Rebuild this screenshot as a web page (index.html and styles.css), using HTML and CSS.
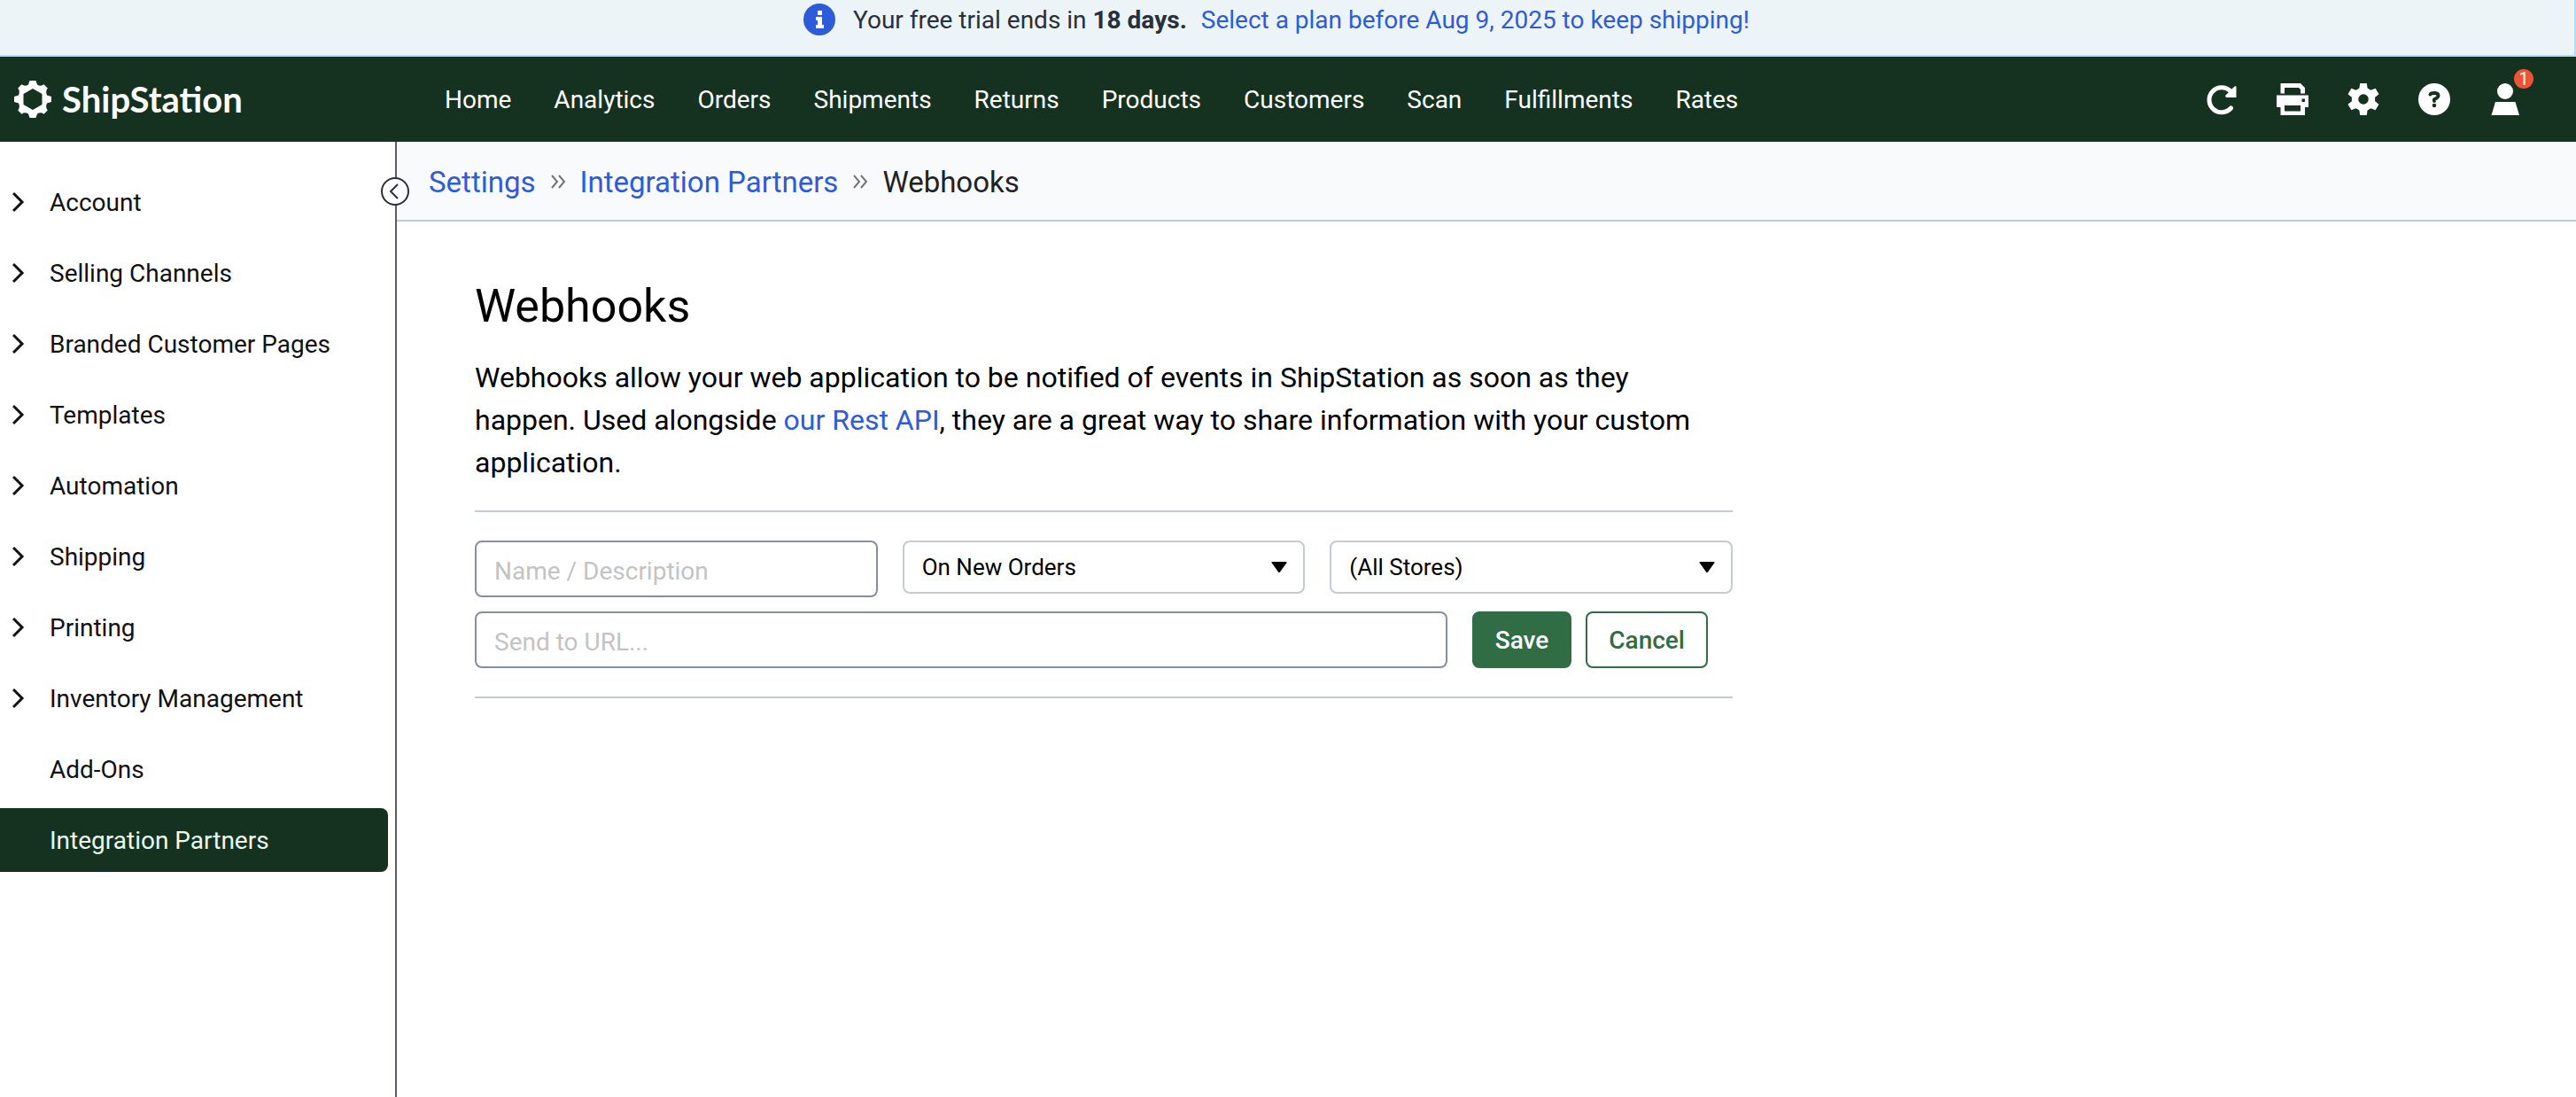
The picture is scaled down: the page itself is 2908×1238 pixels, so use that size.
FILE: index.html
```html
<!DOCTYPE html>
<html lang="en">
<head>
<meta charset="utf-8">
<title>Webhooks - ShipStation</title>
<link rel="stylesheet" href="styles.css">
</head>
<body>
<div class="banner">
  <svg class="banner-icon" viewBox="0 0 36 36" aria-hidden="true"><circle cx="18" cy="18" r="18" fill="#2e5bd7"/><path fill="#fff" d="M16 8h5v5h-5zM14 15h7v9h2v4h-9v-4h2v-5h-2z"/></svg>
  <p class="banner-text">Your free trial ends in <strong>18 days.</strong></p>
  <a class="banner-link" href="#plans">Select a plan before Aug 9, 2025 to keep shipping!</a>
</div>

<header class="topbar">
  <a class="brand" href="#home">
    <svg class="brand-mark" viewBox="0 0 42 42" aria-hidden="true"><path fill="#fff" fill-rule="evenodd" d="M17.500 0h7l1.500 4.500Q30 7 33.500 4.200L37.800 8.500Q35 12 37 16.500L42 18v6l-5 1.500Q35 30 37.800 33.500L33.500 37.800Q30 35 26 37.500L24.500 42h-7L16 37.500Q12 35 8.500 37.800L4.200 33.500Q7 30 5 25.500L0 24v-6l5-1.500Q7 12 4.200 8.500L8.500 4.200Q12 7 16 4.500zM21 9L10.500 15v12L21 33l10.500-6V15z"/></svg>
    <span class="brand-name">ShipStation</span>
  </a>
  <nav class="main-nav" aria-label="Main">
    <a href="#home">Home</a>
    <a href="#analytics">Analytics</a>
    <a href="#orders">Orders</a>
    <a href="#shipments">Shipments</a>
    <a href="#returns">Returns</a>
    <a href="#products">Products</a>
    <a href="#customers">Customers</a>
    <a href="#scan">Scan</a>
    <a href="#fulfillments">Fulfillments</a>
    <a href="#rates">Rates</a>
  </nav>
  <div class="tools">
    <button class="tool" type="button" aria-label="Refresh"><svg viewBox="0 0 36 36" aria-hidden="true"><path fill="none" stroke="#fff" stroke-width="5" stroke-linecap="round" d="M28.500 28A14 14 0 1 1 28 9"/><path fill="#fff" d="M34.500 3.500V16H24q-2.500-.5-1.500-2.500L32 4q1.500-1.200 2.500-.5z"/></svg></button>
    <button class="tool" type="button" aria-label="Print"><svg viewBox="0 0 36 36" aria-hidden="true"><path fill="#fff" fill-rule="evenodd" d="M4.500 0H27l5 5v6.500h-5V7l-2-2H9v6.500H4.500zM0 13.500h36V27h-4v9H4.500v-9H0zM9 25v6.500h18V25zM28.500 17.500v3.500H32v-3.500z"/></svg></button>
    <button class="tool" type="button" aria-label="Settings"><svg viewBox="0 0 36 36" aria-hidden="true"><path fill="#fff" fill-rule="evenodd" d="M14.200 0h7.600l.8 5.500 3.800 2.200 5.200-2 3.900 6.600-4.400 3.400v4.600l4.400 3.400-3.900 6.600-5.200-2-3.800 2.200-.8 5.500h-7.600l-.8-5.500-3.800-2.200-5.200 2L.500 23.700l4.400-3.400v-4.600L.500 12.300l3.900-6.600 5.200 2 3.800-2.200zM18 12.200a5.800 5.800 0 1 0 0 11.600 5.800 5.800 0 0 0 0-11.600z"/></svg></button>
    <button class="tool" type="button" aria-label="Help"><svg viewBox="0 0 36 36" aria-hidden="true"><circle cx="18" cy="18" r="18" fill="#fff"/><path fill="none" stroke="#15311f" stroke-width="4" stroke-linecap="round" stroke-linejoin="round" d="M13.500 12.500Q14.500 11 18 11q4.500 0 4.500 3 0 2-4.500 4.200v1.800"/><circle cx="18" cy="25" r="2.300" fill="#15311f"/></svg></button>
    <button class="tool" type="button" aria-label="Account, 1 notification"><svg viewBox="0 0 36 36" aria-hidden="true"><circle cx="18" cy="9" r="9" fill="#fff"/><path fill="#fff" d="M7 21h22.500L34 36H2.500z"/></svg><span class="badge">1</span></button>
  </div>
</header>

<div class="layout">
  <aside class="sidebar">
    <button class="collapse" type="button" aria-label="Collapse sidebar"><svg viewBox="0 0 32 32" aria-hidden="true"><circle cx="16" cy="16" r="15" fill="#fff" stroke="#27303b" stroke-width="2"/><path fill="none" stroke="#27303b" stroke-width="2" d="M19 8l-8 8 8 8"/></svg></button>
    <nav class="side-nav" aria-label="Settings">
      <a href="#account"><svg class="chev" viewBox="0 0 14 24" aria-hidden="true"><path d="M1 2l10 10L1 22"/></svg>Account</a>
      <a href="#channels"><svg class="chev" viewBox="0 0 14 24" aria-hidden="true"><path d="M1 2l10 10L1 22"/></svg>Selling Channels</a>
      <a href="#branded"><svg class="chev" viewBox="0 0 14 24" aria-hidden="true"><path d="M1 2l10 10L1 22"/></svg>Branded Customer Pages</a>
      <a href="#templates"><svg class="chev" viewBox="0 0 14 24" aria-hidden="true"><path d="M1 2l10 10L1 22"/></svg>Templates</a>
      <a href="#automation"><svg class="chev" viewBox="0 0 14 24" aria-hidden="true"><path d="M1 2l10 10L1 22"/></svg>Automation</a>
      <a href="#shipping"><svg class="chev" viewBox="0 0 14 24" aria-hidden="true"><path d="M1 2l10 10L1 22"/></svg>Shipping</a>
      <a href="#printing"><svg class="chev" viewBox="0 0 14 24" aria-hidden="true"><path d="M1 2l10 10L1 22"/></svg>Printing</a>
      <a href="#inventory"><svg class="chev" viewBox="0 0 14 24" aria-hidden="true"><path d="M1 2l10 10L1 22"/></svg>Inventory Management</a>
      <a class="leaf" href="#addons">Add-Ons</a>
      <a class="leaf active" href="#partners" aria-current="page">Integration Partners</a>
    </nav>
  </aside>

  <main class="main">
    <nav class="crumbs" aria-label="Breadcrumb">
      <a href="#settings">Settings</a>
      <svg class="crumb-sep" viewBox="0 0 18 18" aria-hidden="true"><path d="M2 2l6 7-6 7M10 2l6 7-6 7"/></svg>
      <a href="#partners">Integration Partners</a>
      <svg class="crumb-sep" viewBox="0 0 18 18" aria-hidden="true"><path d="M2 2l6 7-6 7M10 2l6 7-6 7"/></svg>
      <span>Webhooks</span>
    </nav>
    <section class="content">
      <h1>Webhooks</h1>
      <p class="intro">Webhooks allow your web application to be notified of events in ShipStation as soon as they happen. Used alongside <a href="#api">our Rest API</a>, they are a great way to share information with your custom application.</p>
      <form class="hook-form">
        <div class="fields">
          <input class="field" type="text" placeholder="Name / Description" aria-label="Name / Description">
          <div class="select-wrap">
            <select class="select" aria-label="Event"><option>On New Orders</option></select>
            <svg class="caret" viewBox="0 0 18 12" aria-hidden="true"><path d="M1 0h16q1 0 .5 1L10 11.500q-1 1-2 0L.500 1Q0 0 1 0z"/></svg>
          </div>
          <div class="select-wrap">
            <select class="select" aria-label="Store"><option>(All Stores)</option></select>
            <svg class="caret" viewBox="0 0 18 12" aria-hidden="true"><path d="M1 0h16q1 0 .5 1L10 11.500q-1 1-2 0L.500 1Q0 0 1 0z"/></svg>
          </div>
        </div>
        <div class="row">
          <input class="field url" type="url" placeholder="Send to URL..." aria-label="Send to URL">
          <div class="actions">
            <button class="btn primary" type="submit">Save</button>
            <button class="btn" type="button">Cancel</button>
          </div>
        </div>
      </form>
    </section>
  </main>
</div>
</body>
</html>
```

FILE: styles.css
```css
* { box-sizing: border-box; }

body {
  margin: 0;
  min-height: 100vh;
  display: flex;
  flex-direction: column;
  font-family: Roboto, "Liberation Sans", sans-serif;
  font-size: 28px;
  color: #111;
  background: #fff;
}

a { color: #2e5bd7; text-decoration: none; }
button { font: inherit; cursor: pointer; }

/* Trial banner */
.banner {
  display: flex;
  justify-content: center;
  align-items: center;
  height: 64px;
  padding: 0 24px 18px 0;
  background: #ecf4f8;
  border: solid #b9dcf5;
  border-width: 0 2px 2px 0;
  color: #27303b;
}
.banner-icon { width: 36px; height: 36px; margin-right: 20px; }
.banner-text { margin: 0 16px 0 0; }

/* Top bar */
.topbar {
  display: flex;
  align-items: center;
  height: 96px;
  padding: 0 62px 0 16px;
  background: #15311f;
}
.brand { display: flex; align-items: center; gap: 12px; width: 486px; color: #fff; }
.brand-mark { width: 42px; height: 42px; }
.brand-name { font: 700 40px/48px Lato, sans-serif; }
.main-nav { display: flex; gap: 48px; }
.main-nav a { color: #fff; }
.tools { display: flex; gap: 44px; margin-left: auto; }
.tool {
  position: relative;
  width: 36px;
  height: 36px;
  padding: 0;
  border: 0;
  background: none;
}
.tool svg { display: block; width: 36px; height: 36px; }
.badge {
  position: absolute;
  top: -16px;
  right: -14px;
  width: 22px;
  height: 22px;
  border-radius: 50%;
  background: #ee5433;
  color: #fff;
  font-size: 20px;
  line-height: 22px;
  text-align: center;
}

/* Sidebar */
.layout { display: flex; flex: 1; }
.sidebar {
  position: relative;
  flex: none;
  width: 448px;
  padding: 32px 8px 32px 0;
  border-right: 2px solid #5c5c60;
}
.collapse {
  position: absolute;
  top: 40px;
  right: -16px;
  width: 32px;
  height: 32px;
  padding: 0;
  border: 0;
  background: none;
}
.collapse svg { display: block; }
.side-nav { display: flex; flex-direction: column; gap: 8px; }
.side-nav a {
  display: flex;
  align-items: center;
  gap: 28px;
  height: 72px;
  padding-left: 14px;
  border-radius: 0 8px 8px 0;
  color: #111;
}
.side-nav .leaf { padding-left: 56px; }
.side-nav .active { background: #15311f; color: #ebf9ef; }
.chev { width: 14px; height: 24px; fill: none; stroke: #111; stroke-width: 3; }

/* Main column */
.main { flex: 1; min-width: 0; }
.crumbs {
  display: flex;
  align-items: center;
  height: 90px;
  padding: 2px 36px 0;
  gap: 16px;
  background: #f9fafc;
  border-bottom: 2px solid #c3ccd5;
  font-size: 33px;
  color: #222;
}
.crumb-sep { width: 18px; height: 18px; fill: none; stroke: #757575; stroke-width: 2; }
.content { max-width: 1596px; padding: 62px 88px; color: #000; }
h1 { margin: 0 0 22px; font-size: 52px; font-weight: 400; line-height: 68px; }
.intro { margin: 0 0 30px; font-size: 32px; line-height: 48px; }

/* Webhook form */
.hook-form {
  display: flex;
  flex-direction: column;
  gap: 16px;
  padding: 32px 0;
  border: solid #c3ccd5;
  border-width: 2px 0;
}
.fields { display: grid; grid-template-columns: repeat(3, minmax(0, 1fr)); gap: 28px; }
.row { display: flex; gap: 28px; }
.field {
  min-width: 0;
  height: 64px;
  padding: 4px 20px 0;
  border: 2px solid #84909d;
  border-radius: 8px;
  background: #fff;
  font: inherit;
}
.field::placeholder { color: #c3c3c3; opacity: 1; }
.url { flex: 1; }
.select-wrap { position: relative; height: 60px; }
.select {
  appearance: none;
  width: 100%;
  height: 60px;
  padding: 0 20px;
  border: 2px solid #c3ccd5;
  border-radius: 8px;
  background: #fff;
  color: #000;
  font: inherit;
  font-size: 26px;
}
.caret { position: absolute; top: 24px; right: 20px; width: 18px; height: 12px; pointer-events: none; }
.actions { display: flex; gap: 16px; padding-right: 28px; }
.btn {
  height: 64px;
  padding: 0 24px;
  border: 2px solid #306d44;
  border-radius: 8px;
  background: #fff;
  color: #306d44;
  font-weight: 500;
}
.primary { background: #306d44; color: #fff; }
```
